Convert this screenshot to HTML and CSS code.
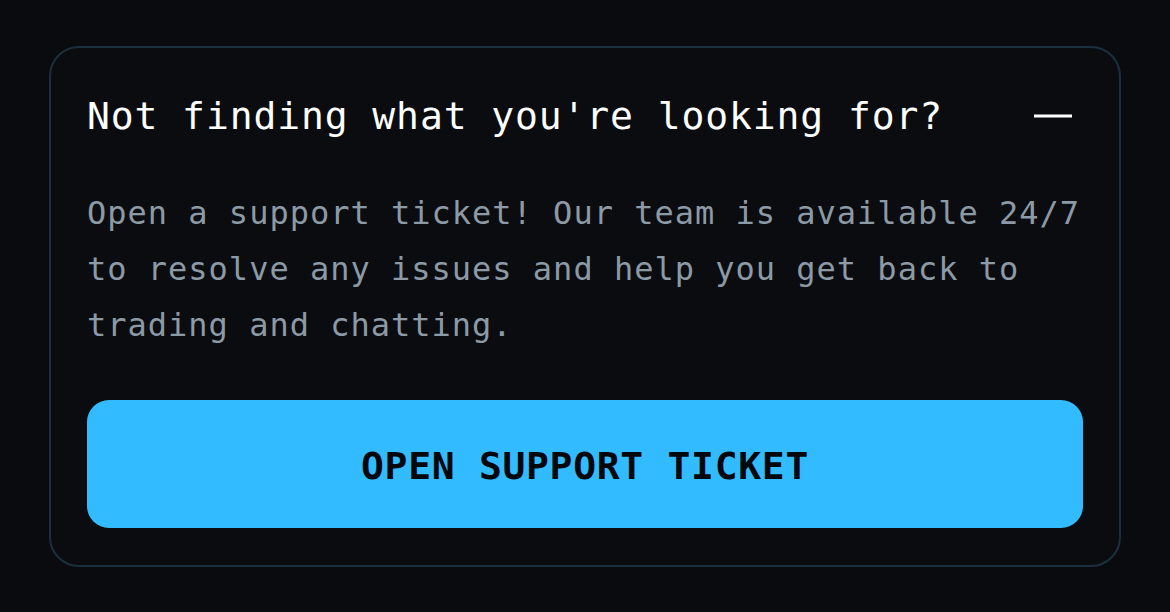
FILE: index.html
```html
<!DOCTYPE html>
<html lang="en">
<head>
    <meta charset="utf-8">
    <title>Support</title>
    <link rel="stylesheet" href="styles.css">
</head>
<body>
    <div class="card">
        <div class="card-header">
            <h2>Not finding what you're looking for?</h2>
            <button type="button" class="collapse" aria-label="Collapse">
                <svg width="38" height="6" viewBox="0 0 38 6"><line x1="0" y1="3" x2="38" y2="3" stroke="#fff" stroke-width="3"/></svg>
            </button>
        </div>

        <p class="card-text">Open a support ticket! Our team is available 24/7 to resolve any issues and help you get back to trading and chatting.</p>

        <button type="button" class="ticket-btn">OPEN SUPPORT TICKET</button>
    </div>
</body>
</html>
```

FILE: styles.css
```css
body {
    font-family: "DejaVu Sans Mono", monospace;
    background-color: #0a0b0e;
    margin: 0;
    padding: 46px 49px;
    box-sizing: border-box;
    min-height: 100vh;
}

.card {
    background-color: #0b0c10;
    border: 2px solid #1a303e;
    border-radius: 30px;
    padding: 45px 36px 37px;
}

.card-header {
    display: flex;
    align-items: center;
    justify-content: space-between;
}

h2 {
    margin: 0;
    font-size: 38px;
    line-height: 46px;
    font-weight: normal;
    letter-spacing: 0.9px;
    color: #fff;
}

.collapse {
    background: none;
    border: none;
    padding: 0;
    margin-right: 11px;
    display: flex;
    cursor: pointer;
}

.card-text {
    margin: 46px 0 47px;
    font-size: 32px;
    line-height: 56px;
    letter-spacing: 1px;
    color: #8c9aa6;
}

.ticket-btn {
    display: block;
    width: 100%;
    height: 128px;
    padding: 4px 0 0;
    background-color: #33bbff;
    color: #04070c;
    border: none;
    border-radius: 22px;
    font-family: "DejaVu Sans Mono", monospace;
    font-size: 38px;
    font-weight: bold;
    letter-spacing: 0.7px;
    cursor: pointer;
}
```
